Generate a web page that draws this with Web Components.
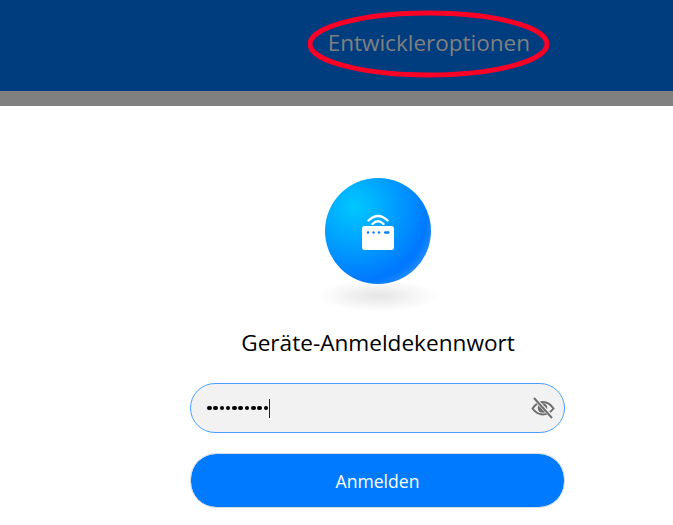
<!doctype html>
<html lang="de">
<head>
<meta charset="utf-8">
<title>Anmelden</title>
<style>
  html, body { margin: 0; background: #fff; font-family: "Open Sans", sans-serif; }
</style>
</head>
<body>
<app-header>Entwickleroptionen</app-header>
<login-form>
  <device-logo slot="logo"></device-logo>
  <span slot="title">Geräte-Anmeldekennwort</span>
  <password-field slot="field"></password-field>
  <primary-button slot="action">Anmelden</primary-button>
</login-form>

<script>
'use strict'

class AppHeader extends HTMLElement {
  constructor () {
    super()
    this.attachShadow({ mode: 'open' }).innerHTML = `
    <style>
      :host {
        display: block;
        background: #003d7e;
        border-bottom: 15px solid #808080;
      }
      #bar {
        height: 91px;
        display: flex;
        justify-content: flex-end;
        padding-right: 143px;
        box-sizing: border-box;
      }
      #link {
        position: relative;
        font-size: 22.5px;
        line-height: 86px;
        color: #808080;
      }
      svg {
        position: absolute;
        left: -20px;
        top: 10px;
      }
    </style>
    <div id="bar">
      <div id="link">
        <slot></slot>
        <svg width="244" height="68" viewBox="0 0 244 68">
          <ellipse cx="120.5" cy="34" rx="118.5" ry="31" fill="none" stroke="#fb0027" stroke-width="5"/>
        </svg>
      </div>
    </div>
    `
  }
}

class DeviceLogo extends HTMLElement {
  constructor () {
    super()
    this.attachShadow({ mode: 'open' }).innerHTML = `
    <style>
      :host {
        display: flex;
        flex-direction: column;
        align-items: center;
        width: 130px;
      }
      #ball {
        width: 106px;
        height: 106px;
        border-radius: 50%;
        display: flex;
        align-items: center;
        justify-content: center;
        background:
          radial-gradient(circle at 40% 42%, rgba(120,190,255,0) 66%, rgba(130,195,255,.5) 86%, rgba(215,238,255,.95) 100%),
          radial-gradient(circle at 28% 27%, #00c8ff 0%, #00a6ff 30%, #0079ff 68%, #0a7cff 100%);
      }
      #shadow {
        width: 124px;
        height: 32px;
        margin-top: -1px;
        background: radial-gradient(ellipse 50% 50% at 50% 40%, rgba(0,0,0,.1) 0%, rgba(0,0,0,.04) 60%, rgba(0,0,0,0) 100%);
      }
    </style>
    <div id="ball">
      <svg width="34" height="40" viewBox="0 0 34 40">
        <path d="M7.5 9.5 Q17 .5 26.5 9.5" fill="none" stroke="#fff" stroke-width="2.4" stroke-linecap="round"/>
        <path d="M11.5 13 Q17 7.5 22.5 13" fill="none" stroke="#fff" stroke-width="2.4" stroke-linecap="round"/>
        <rect x="1" y="15" width="32" height="24" rx="2.5" fill="#fff"/>
        <circle cx="7" cy="21.5" r="1.2" fill="#0a7cff"/>
        <circle cx="12.5" cy="21.5" r="1.2" fill="#0a7cff"/>
        <circle cx="18" cy="21.5" r="1.2" fill="#0a7cff"/>
        <rect x="23" y="20.2" width="5.5" height="2.6" rx="1.2" fill="#0a7cff"/>
      </svg>
    </div>
    <div id="shadow"></div>
    `
  }
}

class PasswordField extends HTMLElement {
  constructor () {
    super()
    this.attachShadow({ mode: 'open' }).innerHTML = `
    <style>
      :host {
        display: flex;
        align-items: center;
        box-sizing: border-box;
        width: 375px;
        height: 50px;
        margin-right: 1px;
        padding: 0 9px 0 16px;
        background: #f2f2f2;
        border: 1px solid #4d9fff;
        border-radius: 25px;
      }
      #dots {
        flex: 1;
        display: flex;
        align-items: center;
        gap: 1.7px;
      }
      #dots i {
        width: 4.6px;
        height: 4.6px;
        border-radius: 50%;
        background: #000;
      }
      #caret {
        width: 1px;
        height: 19px;
        margin-left: -1px;
        background: #222;
      }
      svg { display: block; }
    </style>
    <div id="dots">
      <i></i><i></i><i></i><i></i><i></i><i></i><i></i><i></i><i></i><i></i><span id="caret"></span>
    </div>
    <svg width="24" height="24" viewBox="0 0 24 24">
      <path d="M1.5 12.5 Q6 6 12 6 Q18 6 22.5 12.5 Q18 18.5 12 18.5 Q6 18.5 1.5 12.5 Z" fill="none" stroke="#6e6e6e" stroke-width="2"/>
      <circle cx="11.5" cy="12" r="4.8" fill="#6e6e6e"/>
      <path d="M3.5 2.5 L21 21" stroke="#f2f2f2" stroke-width="4"/>
      <path d="M3 2 L21 22" stroke="#6e6e6e" stroke-width="2"/>
    </svg>
    `
  }
}

class PrimaryButton extends HTMLElement {
  constructor () {
    super()
    this.attachShadow({ mode: 'open' }).innerHTML = `
    <style>
      :host {
        display: flex;
        align-items: center;
        justify-content: center;
        box-sizing: border-box;
        width: 375px;
        height: 55px;
        margin-right: 1px;
        border: 1px solid #d4dde6;
        border-radius: 26px;
        background: #007aff;
        background-clip: padding-box;
        color: #fff;
        font-size: 17.6px;
      }
    </style>
    <slot></slot>
    `
  }
}

class LoginForm extends HTMLElement {
  constructor () {
    super()
    this.attachShadow({ mode: 'open' }).innerHTML = `
    <style>
      :host {
        display: flex;
        flex-direction: column;
        align-items: center;
        padding: 72px 0 0 83px;
        width: 590px;
      }
      #title {
        margin: 13px 0 25px;
        font-size: 22.6px;
        line-height: 30px;
        color: #000;
      }
      ::slotted(primary-button) {
        margin-top: 20px;
      }
    </style>
    <slot name="logo"></slot>
    <div id="title"><slot name="title"></slot></div>
    <slot name="field"></slot>
    <slot name="action"></slot>
    `
  }
}

customElements.define('app-header', AppHeader)
customElements.define('device-logo', DeviceLogo)
customElements.define('password-field', PasswordField)
customElements.define('primary-button', PrimaryButton)
customElements.define('login-form', LoginForm)
</script>
</body>
</html>
